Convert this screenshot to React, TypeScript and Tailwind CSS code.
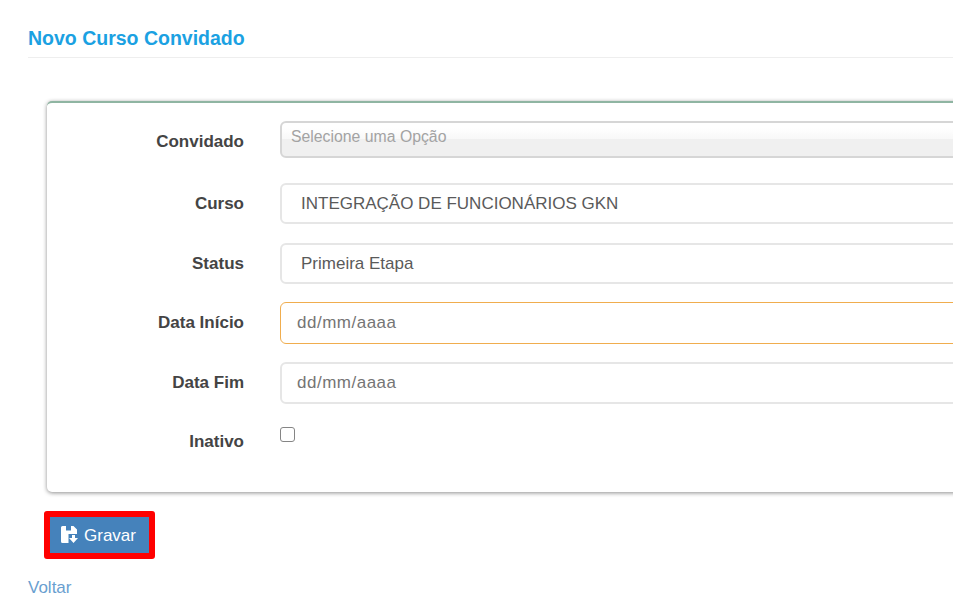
import React from 'react';

const labelClass = "w-[197px] text-right text-[17px] font-bold text-[#444]";

const SaveIcon = () => (
  <svg width="18" height="18" viewBox="0 0 18 18" fill="#fff" className="shrink-0">
    <path d="M1.5 0H5V4.5H10V0H12.5L16 3.5V8H7.5V17H1.5A1.5 1.5 0 0 1 0 15.5V1.5A1.5 1.5 0 0 1 1.5 0z" />
    <path d="M11 9h3v3h3l-4.5 5L8 12h3z" />
  </svg>
);

const App = () => {
  return (
    <div className="w-[953px] h-[611px] overflow-hidden bg-white font-['Liberation_Sans',sans-serif]">
      <div className="w-[1200px] pl-[28px] pt-[26px]">
        {/* Header */}
        <h1 className="text-[19.5px] leading-[24px] font-bold text-[#1ba1e2]">Novo Curso Convidado</h1>
        <div className="mt-[7px] border-b border-[#eeeeee]" />

        {/* Form card */}
        <div className="ml-[19px] mt-[43px] h-[391px] rounded-[5px] border-t-2 border-[#8fb5a2] bg-white pt-[18px] shadow-[0_1px_4px_rgba(0,0,0,0.45)]">
          <div className="flex">
            <div className={`${labelClass} pt-[11px] leading-[20px]`}>Convidado</div>
            <div className="ml-[36px] h-[37px] flex-1 rounded-[6px] border-2 border-[#d6d6d6] bg-[linear-gradient(#fff_15%,#f8f8f8_48%,#f0f0f0_48%)] pl-[9px] text-[15.8px] leading-[28px] text-[#a3a3a3]">
              Selecione uma Opção
            </div>
          </div>

          <div className="mt-[25px] flex items-center">
            <div className={labelClass}>Curso</div>
            <div className="ml-[36px] h-[41px] flex-1 flex items-center rounded-[6px] border-2 border-[#e6e6e6] pl-[19px] text-[17px] text-[#5a5a5a]">
              INTEGRAÇÃO DE FUNCIONÁRIOS GKN
            </div>
          </div>

          <div className="mt-[19px] flex items-center">
            <div className={labelClass}>Status</div>
            <div className="ml-[36px] h-[41px] flex-1 flex items-center rounded-[6px] border-2 border-[#e6e6e6] pl-[19px] text-[17px] text-[#5a5a5a]">
              Primeira Etapa
            </div>
          </div>

          <div className="mt-[18px] flex items-center">
            <div className={labelClass}>Data Início</div>
            <div className="ml-[36px] h-[42px] flex-1 flex items-center rounded-[6px] border border-[#f0ad4e] pl-[16px] text-[17px] tracking-[0.5px] text-[#757575]">
              dd/mm/aaaa
            </div>
          </div>

          <div className="mt-[18px] flex items-center">
            <div className={labelClass}>Data Fim</div>
            <div className="ml-[36px] h-[42px] flex-1 flex items-center rounded-[6px] border-2 border-[#e6e6e6] pl-[15px] text-[17px] tracking-[0.5px] text-[#757575]">
              dd/mm/aaaa
            </div>
          </div>

          <div className="mt-[23px] flex">
            <div className={`${labelClass} pt-[5px] leading-[20px]`}>Inativo</div>
            <div className="ml-[36px]">
              <div className="h-[15px] w-[15px] rounded-[3px] border border-[#858585] bg-white" />
            </div>
          </div>
        </div>

        {/* Actions */}
        <button className="ml-[16px] mt-[19px] flex h-[48px] w-[111px] items-center gap-[5px] rounded-[3px] border-[6px] border-[#ff0000] bg-[#4582bb] pl-[11px] text-[17px] text-white">
          <SaveIcon />
          <span className="pt-[2px]">Gravar</span>
        </button>
        <div className="mt-[19px] text-[17px] leading-[20px] text-[#6a9fd0]">Voltar</div>
      </div>
    </div>
  );
};

export default App;
